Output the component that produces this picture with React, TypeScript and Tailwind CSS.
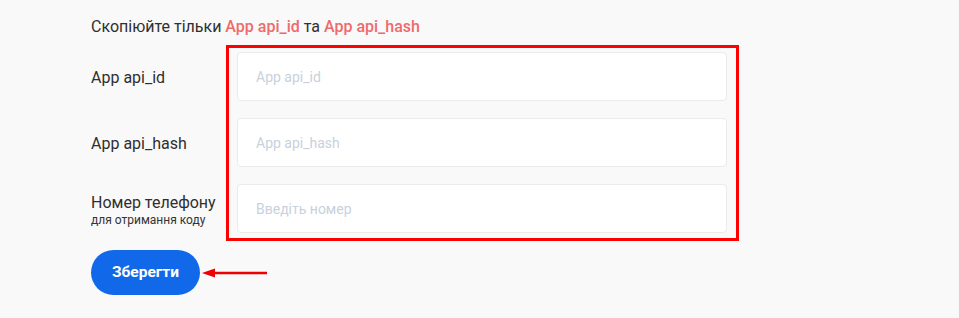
import React from "react";

const fields = [
  { label: "App api_id", placeholder: "App api_id" },
  { label: "App api_hash", placeholder: "App api_hash" },
  { label: "Номер телефону", sub: "для отримання коду", placeholder: "Введіть номер" },
];

export default function App() {
  return (
    <div className="w-[959px] h-[318px] bg-[#f9f9f9] pl-[91px] pt-[16px] font-['Roboto',sans-serif] text-[#2f2f2f]">
      {/* heading */}
      <p className="text-[16px] leading-[22px]">
        Скопіюйте тільки{" "}
        <span className="text-[#ef6b6b] font-medium">App api_id</span> та{" "}
        <span className="text-[#ef6b6b] font-medium">App api_hash</span>
      </p>

      {/* form */}
      <div className="flex mt-[7px]">
        <div className="w-[135px] pt-[8px] flex flex-col gap-[17px]">
          {fields.map((f) => (
            <div key={f.label} className="h-[49px] flex flex-col justify-center">
              <span className="text-[16px] leading-[20px]">{f.label}</span>
              {f.sub && (
                <span className="text-[12px] leading-[14px] text-[#333]">{f.sub}</span>
              )}
            </div>
          ))}
        </div>
        <div className="w-[513px] border-[3px] border-[#ff0000] pt-[4px] pb-[5px] pl-[8px] pr-[9px] flex flex-col gap-[17px]">
          {fields.map((f) => (
            <input
              key={f.label}
              type="text"
              placeholder={f.placeholder}
              className="h-[49px] w-full bg-white border border-[#ebebeb] rounded-[4px] pl-[18px] text-[14px] placeholder:text-[#c8d1dd] outline-none"
            />
          ))}
        </div>
      </div>

      {/* save */}
      <div className="flex items-center mt-[9px]">
        <button className="w-[109px] h-[45px] rounded-full bg-[#1169ea] text-white text-[15.5px] font-bold">
          Зберегти
        </button>
        <svg width="66" height="12" viewBox="0 0 66 12" className="ml-[2px]">
          <line x1="8" y1="6" x2="65" y2="6" stroke="#ee0000" strokeWidth="2.5" />
          <polygon points="0,6 13,1.5 13,10.5" fill="#ee0000" />
        </svg>
      </div>
    </div>
  );
}
